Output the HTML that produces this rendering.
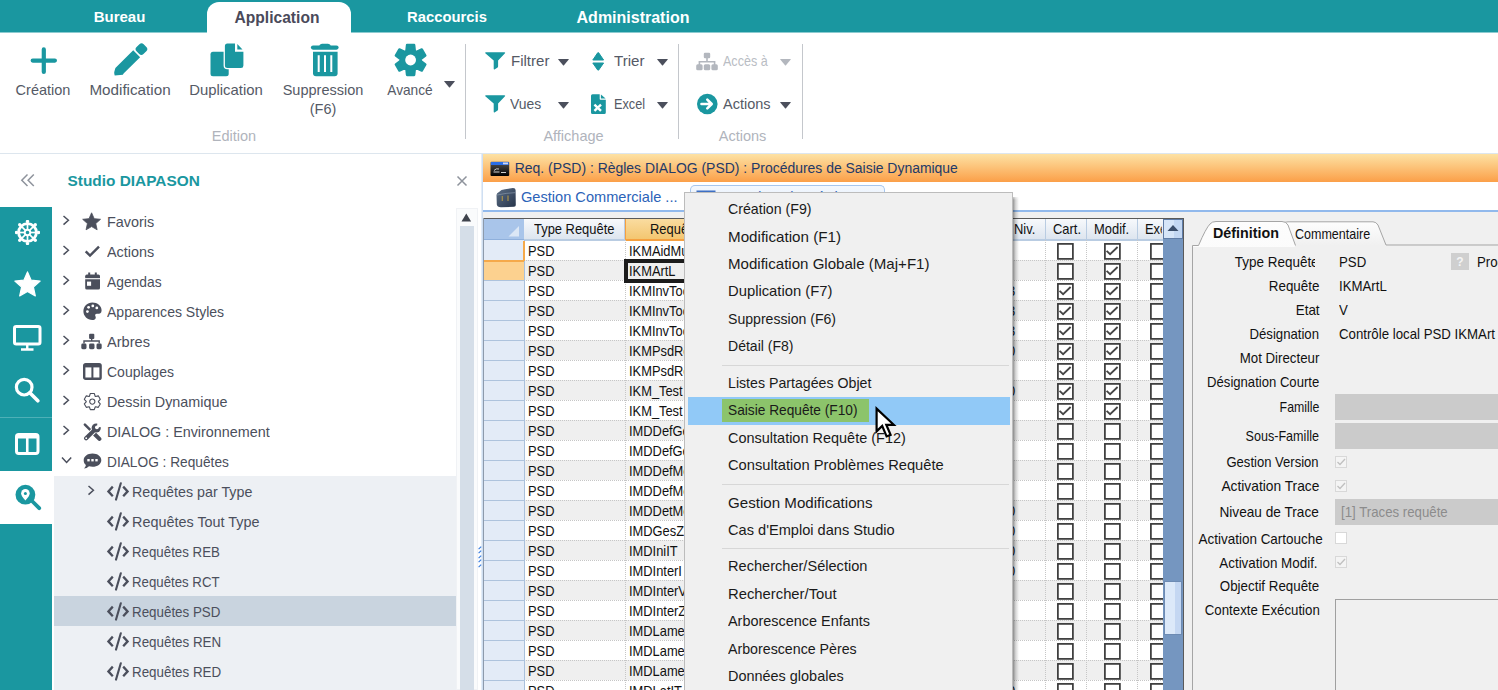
<!DOCTYPE html><html><head><meta charset="utf-8"><style>
html,body{margin:0;padding:0;width:1498px;height:690px;overflow:hidden;background:#fff}
.t{position:absolute;white-space:nowrap;font-family:"Liberation Sans",sans-serif}
.r{position:absolute}
</style></head><body>
<div class="r" style="left:0px;top:0px;width:1498px;height:32px;background:#1a97a0"></div>
<div class="r" style="left:0px;top:32px;width:1498px;height:1px;background:#8ccbd0"></div>
<div class="r" style="left:207px;top:2px;width:144px;height:31px;background:#fff;border-radius:12px 12px 0 0"></div>
<div class="t" style="left:-180.5px;width:600px;text-align:center;top:9.00px;font-size:15px;line-height:15px;color:#fff;font-weight:bold;">Bureau</div>
<div class="t" style="left:-23px;width:600px;text-align:center;top:9.99px;font-size:15.6px;line-height:15.6px;color:#4a4a5a;font-weight:bold;">Application</div>
<div class="t" style="left:147px;width:600px;text-align:center;top:10.27px;font-size:14.8px;line-height:14.8px;color:#fff;font-weight:bold;">Raccourcis</div>
<div class="t" style="left:333px;width:600px;text-align:center;top:9.86px;font-size:16px;line-height:16px;color:#fff;font-weight:bold;">Administration</div>
<div class="r" style="left:0px;top:33px;width:1498px;height:120px;background:#fff"></div>
<div class="r" style="left:0px;top:153px;width:1498px;height:1px;background:#dde6ee"></div>
<div class="t" style="left:-257px;width:600px;text-align:center;top:83.23px;font-size:14.5px;line-height:14.5px;color:#555a66;font-weight:normal;">Création</div>
<div class="t" style="left:-169.8px;width:600px;text-align:center;top:83.23px;font-size:14.5px;line-height:14.5px;color:#555a66;font-weight:normal;transform:scaleX(1.05);transform-origin:center top;">Modification</div>
<div class="t" style="left:-73.80000000000001px;width:600px;text-align:center;top:83.23px;font-size:14.5px;line-height:14.5px;color:#555a66;font-weight:normal;transform:scaleX(1.026);transform-origin:center top;">Duplication</div>
<div class="t" style="left:23px;width:600px;text-align:center;top:83.23px;font-size:14.5px;line-height:14.5px;color:#555a66;font-weight:normal;">Suppression</div>
<div class="t" style="left:23px;width:600px;text-align:center;top:102.23px;font-size:14.5px;line-height:14.5px;color:#555a66;font-weight:normal;">(F6)</div>
<div class="t" style="left:110.30000000000001px;width:600px;text-align:center;top:83.23px;font-size:14.5px;line-height:14.5px;color:#555a66;font-weight:normal;transform:scaleX(0.944);transform-origin:center top;">Avancé</div>
<div class="t" style="left:-66px;width:600px;text-align:center;top:128.73px;font-size:14.5px;line-height:14.5px;color:#b0b4bc;font-weight:normal;">Edition</div>
<div class="t" style="left:273.5px;width:600px;text-align:center;top:128.73px;font-size:14.5px;line-height:14.5px;color:#b0b4bc;font-weight:normal;">Affichage</div>
<div class="t" style="left:442.5px;width:600px;text-align:center;top:128.73px;font-size:14.5px;line-height:14.5px;color:#b0b4bc;font-weight:normal;">Actions</div>
<div class="r" style="left:465px;top:44px;width:1px;height:95px;background:#c4c7cc"></div>
<div class="r" style="left:678px;top:44px;width:1px;height:95px;background:#c4c7cc"></div>
<div class="r" style="left:802px;top:44px;width:1px;height:95px;background:#c4c7cc"></div>
<div class="t" style="left:510.6px;top:54.03px;font-size:14.5px;line-height:14.5px;color:#555a66;font-weight:normal;transform:scaleX(1.037);transform-origin:left top;">Filtrer</div>
<div class="t" style="left:614px;top:54.03px;font-size:14.5px;line-height:14.5px;color:#555a66;font-weight:normal;transform:scaleX(1.042);transform-origin:left top;">Trier</div>
<div class="t" style="left:509.8px;top:97.03px;font-size:14.5px;line-height:14.5px;color:#555a66;font-weight:normal;transform:scaleX(0.96);transform-origin:left top;">Vues</div>
<div class="t" style="left:614.2px;top:97.03px;font-size:14.5px;line-height:14.5px;color:#555a66;font-weight:normal;transform:scaleX(0.877);transform-origin:left top;">Excel</div>
<div class="t" style="left:723.4px;top:54.03px;font-size:14.5px;line-height:14.5px;color:#b9bdc4;font-weight:normal;transform:scaleX(0.865);transform-origin:left top;">Accès à</div>
<div class="t" style="left:723px;top:97.03px;font-size:14.5px;line-height:14.5px;color:#555a66;font-weight:normal;">Actions</div>
<svg class="r" style="left:30px;top:47px" width="28" height="28" viewBox="0 0 28 28"><path d="M13.8 2.4 V24.9 M2.7 13.6 H24.9" stroke="#1a97a0" stroke-width="4.2" stroke-linecap="round"/></svg>
<svg class="r" style="left:110px;top:38px" width="42" height="42" viewBox="0 0 42 42"><g transform="translate(4.6,37.6) rotate(-44.6)"><path d="M0.2 0 Q0.6 -1.2 2 -2.6 L5 -4.4 Q5.8 -4.9 7 -4.9 L31 -4.9 L31 4.9 L8.5 4.9 Q7.5 4.9 6.5 5.2 Z" fill="#1a97a0"/><rect x="32.7" y="-4.9" width="10" height="9.8" rx="3" fill="#1a97a0"/></g></svg>
<svg class="r" style="left:210px;top:43px" width="34" height="34" viewBox="0 0 34 34"><rect x="0.5" y="8.7" width="18.2" height="24.6" rx="2.5" fill="#1a97a0"/><path d="M17.4 0.4 H25 V8.7 H33.4 V22.5 Q33.4 25 31 25 H17.4 Q14.9 25 14.9 22.5 V2.9 Q14.9 0.4 17.4 0.4 Z" fill="#1a97a0" stroke="#fff" stroke-width="2.6"/><path d="M17.4 0.4 H25 V8.7 H33.4 V22.5 Q33.4 25 31 25 H17.4 Q14.9 25 14.9 22.5 V2.9 Q14.9 0.4 17.4 0.4 Z" fill="#1a97a0"/><path d="M27.3 1 L32.5 6.5 L27.3 6.5 Z" fill="#1a97a0"/></svg>
<svg class="r" style="left:310px;top:43px" width="31" height="34" viewBox="0 0 31 34"><path d="M3 4.6 H26.5" stroke="#1a97a0" stroke-width="4.2" stroke-linecap="round"/><path d="M9 3.5 Q9.5 0.8 12 0.8 H18 Q20.5 0.8 21 3.5 Z" fill="#1a97a0"/><path d="M3 8.8 H27.6 V30.3 Q27.6 33.3 24.6 33.3 H6 Q3 33.3 3 30.3 Z" fill="#1a97a0"/><path d="M8.7 12.3 V29.1 M15 12.3 V29.1 M21.3 12.3 V29.1" stroke="#fff" stroke-width="2"/></svg>
<svg class="r" style="left:394px;top:43px" width="34" height="34" viewBox="0 0 34 34"><path d="M12.43 7.69 L13.03 2.02 L20.17 2.02 L20.77 7.69 L22.57 8.73 L27.79 6.42 L31.36 12.60 L26.75 15.96 L26.75 18.04 L31.36 21.40 L27.79 27.58 L22.57 25.27 L20.77 26.31 L20.17 31.98 L13.03 31.98 L12.43 26.31 L10.63 25.27 L5.41 27.58 L1.84 21.40 L6.45 18.04 L6.45 15.96 L1.84 12.60 L5.41 6.42 L10.63 8.73 Z M16.61 17.00 A0.01 0.01 0 1 0 16.59 17.00 A0.01 0.01 0 1 0 16.61 17.00 Z" fill="#1a97a0" stroke="#1a97a0" stroke-width="2.4" stroke-linejoin="round"/><circle cx="16.6" cy="17" r="10.6" fill="#1a97a0"/><circle cx="16.6" cy="17" r="5.4" fill="#fff"/></svg>
<svg class="r" style="left:444px;top:81px" width="11" height="7" viewBox="0 0 11 7"><path d="M0.3 0.6 Q0 0 0.8 0 L10.2 0 Q11 0 10.7 0.6 L6 6.3 Q5.5 6.8 5 6.3 Z" fill="#4b4f5c"/></svg>
<svg class="r" style="left:484.6px;top:52.4px" width="22" height="19" viewBox="0 0 22 19"><path d="M0.8 0.3 H19.5 Q20.6 0.3 20 1.2 L13.1 8.4 V14.3 Q13.1 15 12.6 15.4 L9.9 17.3 Q8.7 17.9 8.7 16.7 V8.4 L0.3 1.2 Q-0.2 0.3 0.8 0.3 Z" fill="#1a97a0"/></svg>
<svg class="r" style="left:484.6px;top:95px" width="22" height="19" viewBox="0 0 22 19"><path d="M0.8 0.3 H19.5 Q20.6 0.3 20 1.2 L13.1 8.4 V14.3 Q13.1 15 12.6 15.4 L9.9 17.3 Q8.7 17.9 8.7 16.7 V8.4 L0.3 1.2 Q-0.2 0.3 0.8 0.3 Z" fill="#1a97a0"/></svg>
<svg class="r" style="left:558px;top:59px" width="11" height="7" viewBox="0 0 11 7"><path d="M0.3 0.6 Q0 0 0.8 0 L10.2 0 Q11 0 10.7 0.6 L6 6.3 Q5.5 6.8 5 6.3 Z" fill="#4b4f5c"/></svg>
<svg class="r" style="left:558px;top:102px" width="11" height="7" viewBox="0 0 11 7"><path d="M0.3 0.6 Q0 0 0.8 0 L10.2 0 Q11 0 10.7 0.6 L6 6.3 Q5.5 6.8 5 6.3 Z" fill="#4b4f5c"/></svg>
<svg class="r" style="left:656.5px;top:59px" width="11" height="7" viewBox="0 0 11 7"><path d="M0.3 0.6 Q0 0 0.8 0 L10.2 0 Q11 0 10.7 0.6 L6 6.3 Q5.5 6.8 5 6.3 Z" fill="#4b4f5c"/></svg>
<svg class="r" style="left:656.5px;top:102px" width="11" height="7" viewBox="0 0 11 7"><path d="M0.3 0.6 Q0 0 0.8 0 L10.2 0 Q11 0 10.7 0.6 L6 6.3 Q5.5 6.8 5 6.3 Z" fill="#4b4f5c"/></svg>
<svg class="r" style="left:591px;top:52px" width="15" height="19" viewBox="0 0 15 19"><path d="M1.8 8 L6.7 0.8 Q7.2 0.3 7.7 0.8 L12.6 8 Z M1.8 11 L12.6 11 L7.7 18 Q7.2 18.5 6.7 18 Z" fill="#1a97a0" stroke="#1a97a0" stroke-width="1" stroke-linejoin="round"/></svg>
<svg class="r" style="left:590px;top:93px" width="17" height="22" viewBox="0 0 17 22"><path d="M2.5 1.2 H9.7 V6 Q9.7 6.7 10.4 6.7 H15.8 V19.5 Q15.8 21 14.3 21 H2.5 Q1 21 1 19.5 V2.7 Q1 1.2 2.5 1.2 Z" fill="#1a97a0"/><path d="M10.9 1.4 L15.6 5.6 H10.9 Z" fill="#1a97a0"/><path d="M4.4 11.6 L11 17.8 M11 11.6 L4.4 17.8" stroke="#fff" stroke-width="2.4"/></svg>
<svg class="r" style="left:695px;top:52px" width="25" height="20" viewBox="0 0 25 20"><rect x="8.8" y="0.8" width="6.4" height="5.4" rx="1.2" fill="#b3b7be"/><path d="M12 6 V9.8 M4.4 13 V9.8 H19.6 V13" fill="none" stroke="#b3b7be" stroke-width="1.6"/><rect x="1.2" y="12.2" width="6.4" height="6" rx="1.5" fill="#b3b7be"/><rect x="8.8" y="12.2" width="6.4" height="6" rx="1.5" fill="#b3b7be"/><rect x="16.4" y="12.2" width="6.4" height="6" rx="1.5" fill="#b3b7be"/></svg>
<svg class="r" style="left:780px;top:59px" width="11" height="7" viewBox="0 0 11 7"><path d="M0.3 0.6 Q0 0 0.8 0 L10.2 0 Q11 0 10.7 0.6 L6 6.3 Q5.5 6.8 5 6.3 Z" fill="#b3b7be"/></svg>
<svg class="r" style="left:696px;top:93px" width="23" height="23" viewBox="0 0 23 23"><circle cx="11.3" cy="11" r="10.3" fill="#1a97a0"/><path d="M5.5 11 H15.5 M11.3 6.6 L15.7 11 L11.3 15.4" fill="none" stroke="#fff" stroke-width="2.6" stroke-linecap="round" stroke-linejoin="round"/></svg>
<svg class="r" style="left:780px;top:102px" width="11" height="7" viewBox="0 0 11 7"><path d="M0.3 0.6 Q0 0 0.8 0 L10.2 0 Q11 0 10.7 0.6 L6 6.3 Q5.5 6.8 5 6.3 Z" fill="#4b4f5c"/></svg>
<div class="r" style="left:0px;top:154px;width:481px;height:536px;background:#fff"></div>
<div class="t" style="left:67.5px;top:172.56px;font-size:15.4px;line-height:15.4px;color:#1a97a0;font-weight:bold;">Studio DIAPASON</div>
<div class="r" style="left:0px;top:206.5px;width:52.4px;height:483.5px;background:#1a97a0"></div>
<div class="r" style="left:0px;top:471px;width:52.4px;height:52.5px;background:#fff"></div>
<div class="r" style="left:0px;top:416.5px;width:52.4px;height:1.5px;background:#4eb0b7"></div>
<div class="r" style="left:54px;top:476px;width:402px;height:214px;background:#edf0f4"></div>
<div class="r" style="left:54px;top:596px;width:402px;height:30px;background:#c9d4df"></div>
<div class="t" style="left:106.5px;top:214.68px;font-size:14.2px;line-height:14.2px;color:#4b4f5c;font-weight:normal;transform:scaleX(1.016);transform-origin:left top;">Favoris</div>
<div class="t" style="left:106.5px;top:244.68px;font-size:14.2px;line-height:14.2px;color:#4b4f5c;font-weight:normal;transform:scaleX(1.016);transform-origin:left top;">Actions</div>
<div class="t" style="left:106.5px;top:274.68px;font-size:14.2px;line-height:14.2px;color:#4b4f5c;font-weight:normal;transform:scaleX(0.974);transform-origin:left top;">Agendas</div>
<div class="t" style="left:106.5px;top:304.68px;font-size:14.2px;line-height:14.2px;color:#4b4f5c;font-weight:normal;transform:scaleX(0.99);transform-origin:left top;">Apparences Styles</div>
<div class="t" style="left:106.5px;top:334.68px;font-size:14.2px;line-height:14.2px;color:#4b4f5c;font-weight:normal;transform:scaleX(1.028);transform-origin:left top;">Arbres</div>
<div class="t" style="left:106.5px;top:364.68px;font-size:14.2px;line-height:14.2px;color:#4b4f5c;font-weight:normal;transform:scaleX(0.987);transform-origin:left top;">Couplages</div>
<div class="t" style="left:106.5px;top:394.68px;font-size:14.2px;line-height:14.2px;color:#4b4f5c;font-weight:normal;transform:scaleX(1.011);transform-origin:left top;">Dessin Dynamique</div>
<div class="t" style="left:106.5px;top:424.68px;font-size:14.2px;line-height:14.2px;color:#4b4f5c;font-weight:normal;transform:scaleX(1.011);transform-origin:left top;">DIALOG : Environnement</div>
<div class="t" style="left:106.5px;top:454.68px;font-size:14.2px;line-height:14.2px;color:#4b4f5c;font-weight:normal;transform:scaleX(0.966);transform-origin:left top;">DIALOG : Requêtes</div>
<div class="t" style="left:132px;top:484.68px;font-size:14.2px;line-height:14.2px;color:#4b4f5c;font-weight:normal;transform:scaleX(1.006);transform-origin:left top;">Requêtes par Type</div>
<div class="t" style="left:132px;top:514.68px;font-size:14.2px;line-height:14.2px;color:#4b4f5c;font-weight:normal;transform:scaleX(1.015);transform-origin:left top;">Requêtes Tout Type</div>
<div class="t" style="left:132px;top:544.68px;font-size:14.2px;line-height:14.2px;color:#4b4f5c;font-weight:normal;transform:scaleX(0.936);transform-origin:left top;">Requêtes REB</div>
<div class="t" style="left:132px;top:574.68px;font-size:14.2px;line-height:14.2px;color:#4b4f5c;font-weight:normal;transform:scaleX(0.933);transform-origin:left top;">Requêtes RCT</div>
<div class="t" style="left:132px;top:604.68px;font-size:14.2px;line-height:14.2px;color:#4b4f5c;font-weight:normal;transform:scaleX(0.942);transform-origin:left top;">Requêtes PSD</div>
<div class="t" style="left:132px;top:634.68px;font-size:14.2px;line-height:14.2px;color:#4b4f5c;font-weight:normal;transform:scaleX(0.942);transform-origin:left top;">Requêtes REN</div>
<div class="t" style="left:132px;top:664.68px;font-size:14.2px;line-height:14.2px;color:#4b4f5c;font-weight:normal;transform:scaleX(0.942);transform-origin:left top;">Requêtes RED</div>
<div class="r" style="left:456px;top:208px;width:22px;height:482px;background:#fafbfc;border:1px solid #f0f2f5;box-sizing:border-box"></div>
<div class="r" style="left:460px;top:226px;width:14px;height:464px;background:#d5dee8"></div>
<svg class="r" style="left:20px;top:173px" width="16" height="15" viewBox="0 0 16 15"><path d="M7.5 1.5 L1.8 7.2 L7.5 13 M13.8 1.5 L8.1 7.2 L13.8 13" fill="none" stroke="#8e939c" stroke-width="1.5"/></svg>
<svg class="r" style="left:456px;top:175px" width="12" height="12" viewBox="0 0 12 12"><path d="M1.5 1.5 L10.5 10.5 M10.5 1.5 L1.5 10.5" stroke="#8e939c" stroke-width="1.5"/></svg>
<svg class="r" style="left:14.6px;top:219.8px" width="25" height="25" viewBox="0 0 25 25"><line x1="12.50" y1="9.20" x2="12.50" y2="3.50" stroke="#fff" stroke-width="1.7"/><circle cx="12.50" cy="1.50" r="1.7" fill="#fff"/><line x1="14.83" y1="10.17" x2="18.86" y2="6.14" stroke="#fff" stroke-width="1.7"/><circle cx="20.28" cy="4.72" r="1.7" fill="#fff"/><line x1="15.80" y1="12.50" x2="21.50" y2="12.50" stroke="#fff" stroke-width="1.7"/><circle cx="23.50" cy="12.50" r="1.7" fill="#fff"/><line x1="14.83" y1="14.83" x2="18.86" y2="18.86" stroke="#fff" stroke-width="1.7"/><circle cx="20.28" cy="20.28" r="1.7" fill="#fff"/><line x1="12.50" y1="15.80" x2="12.50" y2="21.50" stroke="#fff" stroke-width="1.7"/><circle cx="12.50" cy="23.50" r="1.7" fill="#fff"/><line x1="10.17" y1="14.83" x2="6.14" y2="18.86" stroke="#fff" stroke-width="1.7"/><circle cx="4.72" cy="20.28" r="1.7" fill="#fff"/><line x1="9.20" y1="12.50" x2="3.50" y2="12.50" stroke="#fff" stroke-width="1.7"/><circle cx="1.50" cy="12.50" r="1.7" fill="#fff"/><line x1="10.17" y1="10.17" x2="6.14" y2="6.14" stroke="#fff" stroke-width="1.7"/><circle cx="4.72" cy="4.72" r="1.7" fill="#fff"/><circle cx="12.5" cy="12.5" r="8.9" fill="none" stroke="#fff" stroke-width="2.9"/><circle cx="12.5" cy="12.5" r="2.8" fill="none" stroke="#fff" stroke-width="2"/></svg>
<svg class="r" style="left:14px;top:271px" width="27" height="27" viewBox="0 0 27 27"><path d="M13.50 0.90 L17.14 9.18 L26.15 10.09 L19.40 16.12 L21.32 24.96 L13.50 20.40 L5.68 24.96 L7.60 16.12 L0.85 10.09 L9.86 9.18 Z" fill="#fff" stroke="#fff" stroke-width="1.2" stroke-linejoin="round"/></svg>
<svg class="r" style="left:12.7px;top:324.5px" width="29" height="27" viewBox="0 0 29 27"><rect x="1.5" y="1.5" width="25.5" height="17.5" rx="1.8" fill="none" stroke="#fff" stroke-width="3"/><path d="M14.25 19 V23.5 M8 24.5 H20.5" stroke="#fff" stroke-width="2.4"/></svg>
<svg class="r" style="left:14px;top:377px" width="27" height="26" viewBox="0 0 27 26"><circle cx="10.2" cy="10.2" r="7.8" fill="none" stroke="#fff" stroke-width="3.2"/><path d="M15.8 15.8 L23.8 23.8" stroke="#fff" stroke-width="3.6" stroke-linecap="round"/></svg>
<svg class="r" style="left:15px;top:432.5px" width="25" height="22" viewBox="0 0 25 22"><rect x="1.5" y="1.5" width="21.5" height="19" rx="2.2" fill="none" stroke="#fff" stroke-width="3"/><path d="M12.25 3 V20" stroke="#fff" stroke-width="2.6"/><path d="M1.5 4 H23" stroke="#fff" stroke-width="3"/></svg>
<svg class="r" style="left:14.5px;top:484px" width="27" height="27" viewBox="0 0 27 27"><circle cx="10.4" cy="10.7" r="9.9" fill="#1a97a0"/><path d="M17 17 L24.2 24.2" stroke="#1a97a0" stroke-width="3.8" stroke-linecap="round"/><path d="M10.4 16.6 Q6.1 11.6 6.1 9.4 A4.3 4.3 0 0 1 14.7 9.4 Q14.7 11.6 10.4 16.6 Z" fill="#fff"/><circle cx="10.4" cy="9.4" r="1.5" fill="#1a97a0"/></svg>
<svg class="r" style="left:61.5px;top:214.6px" width="9" height="11" viewBox="0 0 9 11"><path d="M1.5 1 L6.4 5.3 L1.5 9.6" fill="none" stroke="#4b4f5c" stroke-width="1.5"/></svg>
<svg class="r" style="left:61.5px;top:244.6px" width="9" height="11" viewBox="0 0 9 11"><path d="M1.5 1 L6.4 5.3 L1.5 9.6" fill="none" stroke="#4b4f5c" stroke-width="1.5"/></svg>
<svg class="r" style="left:61.5px;top:274.6px" width="9" height="11" viewBox="0 0 9 11"><path d="M1.5 1 L6.4 5.3 L1.5 9.6" fill="none" stroke="#4b4f5c" stroke-width="1.5"/></svg>
<svg class="r" style="left:61.5px;top:304.6px" width="9" height="11" viewBox="0 0 9 11"><path d="M1.5 1 L6.4 5.3 L1.5 9.6" fill="none" stroke="#4b4f5c" stroke-width="1.5"/></svg>
<svg class="r" style="left:61.5px;top:334.6px" width="9" height="11" viewBox="0 0 9 11"><path d="M1.5 1 L6.4 5.3 L1.5 9.6" fill="none" stroke="#4b4f5c" stroke-width="1.5"/></svg>
<svg class="r" style="left:61.5px;top:364.6px" width="9" height="11" viewBox="0 0 9 11"><path d="M1.5 1 L6.4 5.3 L1.5 9.6" fill="none" stroke="#4b4f5c" stroke-width="1.5"/></svg>
<svg class="r" style="left:61.5px;top:394.6px" width="9" height="11" viewBox="0 0 9 11"><path d="M1.5 1 L6.4 5.3 L1.5 9.6" fill="none" stroke="#4b4f5c" stroke-width="1.5"/></svg>
<svg class="r" style="left:61.5px;top:424.6px" width="9" height="11" viewBox="0 0 9 11"><path d="M1.5 1 L6.4 5.3 L1.5 9.6" fill="none" stroke="#4b4f5c" stroke-width="1.5"/></svg>
<svg class="r" style="left:60.5px;top:456px" width="12" height="9" viewBox="0 0 12 9"><path d="M1 1.5 L5.6 6.5 L10.2 1.5" fill="none" stroke="#4b4f5c" stroke-width="1.5"/></svg>
<svg class="r" style="left:86.5px;top:485px" width="9" height="11" viewBox="0 0 9 11"><path d="M1.5 1 L6.4 5.3 L1.5 9.6" fill="none" stroke="#4b4f5c" stroke-width="1.5"/></svg>
<svg class="r" style="left:82px;top:212px" width="20" height="19" viewBox="0 0 20 19"><path d="M9.60 0.80 L12.19 6.64 L18.54 7.30 L13.78 11.56 L15.13 17.80 L9.60 14.60 L4.07 17.80 L5.42 11.56 L0.66 7.30 L7.01 6.64 Z" fill="#4b4f5c" stroke="#4b4f5c" stroke-width="0.8" stroke-linejoin="round"/></svg>
<svg class="r" style="left:84px;top:245px" width="17" height="13" viewBox="0 0 17 13"><path d="M1.7 6.3 L6 10.6 L15 1.6" fill="none" stroke="#4b4f5c" stroke-width="2.4"/></svg>
<svg class="r" style="left:85px;top:272px" width="16" height="18" viewBox="0 0 16 18"><rect x="0.2" y="2.6" width="14.8" height="14.9" rx="1.6" fill="#4b4f5c"/><rect x="3.2" y="0.5" width="2" height="3.5" fill="#4b4f5c"/><rect x="9.8" y="0.5" width="2" height="3.5" fill="#4b4f5c"/><path d="M0 6.7 H15" stroke="#fff" stroke-width="1.1"/><rect x="2" y="9.6" width="4.1" height="4.2" fill="#fff"/></svg>
<svg class="r" style="left:83px;top:302px" width="19" height="19" viewBox="0 0 19 19"><path d="M9.3 0.6 C14.5 0.6 18.6 4 18.6 8.4 C18.6 11.4 16 12 14.3 11.8 C12.4 11.6 11.7 13 12.4 14.2 C13.3 15.8 12.6 18 9.3 18 C4.4 18 0.4 14.1 0.4 9.3 C0.4 4.5 4.4 0.6 9.3 0.6 Z" fill="#4b4f5c"/><circle cx="4.4" cy="9.6" r="1.4" fill="#fff"/><circle cx="5.6" cy="5.3" r="1.4" fill="#fff"/><circle cx="9.8" cy="3.9" r="1.4" fill="#fff"/><circle cx="13.8" cy="5.9" r="1.4" fill="#fff"/></svg>
<svg class="r" style="left:81px;top:333px" width="21" height="17" viewBox="0 0 21 17"><rect x="8.1" y="0.8" width="5.2" height="5.2" rx="1" fill="#4b4f5c"/><path d="M10.7 5.5 V8 M3 10.5 V8 H18.2 V10.5" fill="none" stroke="#4b4f5c" stroke-width="1.4"/><rect x="0.3" y="10.6" width="5.2" height="5.6" rx="1.4" fill="#4b4f5c"/><rect x="8.1" y="10.6" width="5.4" height="5.6" rx="1.4" fill="#4b4f5c"/><rect x="15.5" y="10.6" width="5.2" height="5.6" rx="1.4" fill="#4b4f5c"/></svg>
<svg class="r" style="left:83px;top:363px" width="19" height="17" viewBox="0 0 19 17"><rect x="1.2" y="1.2" width="16.4" height="14.6" rx="1.4" fill="none" stroke="#4b4f5c" stroke-width="2.4"/><path d="M1.2 2.8 H17.6" stroke="#4b4f5c" stroke-width="3.2"/><path d="M9.4 3 V15" stroke="#4b4f5c" stroke-width="2"/></svg>
<svg class="r" style="left:83px;top:392px" width="19" height="19" viewBox="0 0 19 19"><path d="M6.42 4.22 L7.32 1.54 L11.28 1.54 L12.18 4.22 L12.52 4.42 L15.29 3.85 L17.27 7.29 L15.40 9.41 L15.40 9.79 L17.27 11.91 L15.29 15.35 L12.52 14.78 L12.18 14.98 L11.28 17.66 L7.32 17.66 L6.42 14.98 L6.08 14.78 L3.31 15.35 L1.33 11.91 L3.20 9.79 L3.20 9.41 L1.33 7.29 L3.31 3.85 L6.08 4.42 Z M11.90 9.60 A2.6 2.6 0 1 0 6.70 9.60 A2.6 2.6 0 1 0 11.90 9.60 Z" fill="none" stroke="#4b4f5c" stroke-width="1.1" stroke-linejoin="round"/></svg>
<svg class="r" style="left:82.5px;top:422.5px" width="20" height="18" viewBox="0 0 20 18"><path d="M1.9 1.6 L10.2 9.8" stroke="#4b4f5c" stroke-width="2.5" stroke-linecap="round"/><path d="M11.2 10.8 L16.4 15.9" stroke="#4b4f5c" stroke-width="4" stroke-linecap="round"/><path d="M3.1 15.3 L10.6 7.9" stroke="#fff" stroke-width="6" stroke-linecap="round"/><path d="M3.1 15.3 L10.6 7.9" stroke="#4b4f5c" stroke-width="4.1" stroke-linecap="round"/><circle cx="13.2" cy="5" r="4.6" fill="#4b4f5c"/><circle cx="13.9" cy="4.3" r="1.9" fill="#fff"/><path d="M13.9 4.3 L14.6 -1.5 L20.5 4 Z" fill="#fff"/><circle cx="3.2" cy="15.2" r="0.9" fill="#fff"/></svg>
<svg class="r" style="left:83px;top:453px" width="19" height="17" viewBox="0 0 19 17"><path d="M9.5 0.6 C14.6 0.6 18.3 3.5 18.3 7.2 C18.3 10.9 14.6 13.8 9.5 13.8 C8.2 13.8 7.1 13.6 6 13.3 Q3.8 15.4 1 15.6 Q2.8 13.8 2.9 12 C1.4 10.8 0.7 9.1 0.7 7.2 C0.7 3.5 4.4 0.6 9.5 0.6 Z" fill="#4b4f5c"/><rect x="4.3" y="6" width="2.4" height="2.4" fill="#fff"/><rect x="8.3" y="6" width="2.4" height="2.4" fill="#fff"/><rect x="12.3" y="6" width="2.4" height="2.4" fill="#fff"/></svg>
<svg class="r" style="left:105.5px;top:482px" width="25" height="19" viewBox="0 0 25 19"><path d="M6.8 4.6 L2.4 9.4 L6.8 14.2 M17.2 4.6 L21.6 9.4 L17.2 14.2" fill="none" stroke="#4b4f5c" stroke-width="2.3"/><path d="M14.8 1.2 L10 17.6" stroke="#4b4f5c" stroke-width="2.1" stroke-linecap="round"/></svg>
<svg class="r" style="left:105.5px;top:512px" width="25" height="19" viewBox="0 0 25 19"><path d="M6.8 4.6 L2.4 9.4 L6.8 14.2 M17.2 4.6 L21.6 9.4 L17.2 14.2" fill="none" stroke="#4b4f5c" stroke-width="2.3"/><path d="M14.8 1.2 L10 17.6" stroke="#4b4f5c" stroke-width="2.1" stroke-linecap="round"/></svg>
<svg class="r" style="left:105.5px;top:542px" width="25" height="19" viewBox="0 0 25 19"><path d="M6.8 4.6 L2.4 9.4 L6.8 14.2 M17.2 4.6 L21.6 9.4 L17.2 14.2" fill="none" stroke="#4b4f5c" stroke-width="2.3"/><path d="M14.8 1.2 L10 17.6" stroke="#4b4f5c" stroke-width="2.1" stroke-linecap="round"/></svg>
<svg class="r" style="left:105.5px;top:572px" width="25" height="19" viewBox="0 0 25 19"><path d="M6.8 4.6 L2.4 9.4 L6.8 14.2 M17.2 4.6 L21.6 9.4 L17.2 14.2" fill="none" stroke="#4b4f5c" stroke-width="2.3"/><path d="M14.8 1.2 L10 17.6" stroke="#4b4f5c" stroke-width="2.1" stroke-linecap="round"/></svg>
<svg class="r" style="left:105.5px;top:602px" width="25" height="19" viewBox="0 0 25 19"><path d="M6.8 4.6 L2.4 9.4 L6.8 14.2 M17.2 4.6 L21.6 9.4 L17.2 14.2" fill="none" stroke="#4b4f5c" stroke-width="2.3"/><path d="M14.8 1.2 L10 17.6" stroke="#4b4f5c" stroke-width="2.1" stroke-linecap="round"/></svg>
<svg class="r" style="left:105.5px;top:632px" width="25" height="19" viewBox="0 0 25 19"><path d="M6.8 4.6 L2.4 9.4 L6.8 14.2 M17.2 4.6 L21.6 9.4 L17.2 14.2" fill="none" stroke="#4b4f5c" stroke-width="2.3"/><path d="M14.8 1.2 L10 17.6" stroke="#4b4f5c" stroke-width="2.1" stroke-linecap="round"/></svg>
<svg class="r" style="left:105.5px;top:662px" width="25" height="19" viewBox="0 0 25 19"><path d="M6.8 4.6 L2.4 9.4 L6.8 14.2 M17.2 4.6 L21.6 9.4 L17.2 14.2" fill="none" stroke="#4b4f5c" stroke-width="2.3"/><path d="M14.8 1.2 L10 17.6" stroke="#4b4f5c" stroke-width="2.1" stroke-linecap="round"/></svg>
<div class="r" style="left:481px;top:154px;width:1017px;height:536px;background:#f0f0f0"></div>
<div class="r" style="left:481px;top:154px;width:1px;height:536px;background:#e4edf8"></div>
<div class="r" style="left:482px;top:154px;width:1px;height:536px;background:#cfdff2"></div>
<div class="r" style="left:483px;top:154px;width:1015px;height:28.5px;background:linear-gradient(#fde2a4,#fb9d45)"></div>
<div class="t" style="left:514.8px;top:161.79px;font-size:13.95px;line-height:13.95px;color:#233a68;font-weight:normal;">Req. (PSD) : Règles DIALOG (PSD) : Procédures de Saisie Dynamique</div>
<div class="r" style="left:483px;top:182px;width:1015px;height:28px;background:#fff"></div>
<div class="r" style="left:483px;top:210px;width:1015px;height:2px;background:#91b9ec"></div>
<div class="t" style="left:521px;top:190.14px;font-size:14.6px;line-height:14.6px;color:#2b63b8;font-weight:normal;">Gestion Commerciale ...</div>
<svg class="r" style="left:490px;top:161px" width="20" height="16" viewBox="0 0 20 16"><defs><linearGradient id="cg" x1="0" y1="0" x2="0" y2="1"><stop offset="0" stop-color="#555"/><stop offset="1" stop-color="#000"/></linearGradient></defs><rect x="0.5" y="0.7" width="18.7" height="14.3" rx="1" fill="url(#cg)"/><rect x="1" y="1" width="17.7" height="3" fill="#2a6ee8"/><rect x="13" y="1.5" width="5" height="1.8" fill="#cfd8f0"/><path d="M4 9.5 Q6 7 9 8 M3.5 11 H9.5 M11 11.5 H16" stroke="#cfcfcf" stroke-width="1" fill="none"/></svg>
<svg class="r" style="left:496px;top:187px" width="21" height="21" viewBox="0 0 21 21"><defs><linearGradient id="bg1" x1="0" y1="0" x2="1" y2="1"><stop offset="0" stop-color="#5d6f86"/><stop offset="1" stop-color="#26344a"/></linearGradient></defs><path d="M3 5 Q5 2.5 9 2.2 L17 1 Q19.5 1 19.6 3 L19.8 18 Q19.8 19.6 18 19.8 L5 20.3 Q1 20 0.8 17.5 L0.5 8 Q0.6 6 3 5 Z" fill="url(#bg1)"/><path d="M6.3 9 V14 M12 8.6 V14" stroke="#a9924a" stroke-width="1.2"/><path d="M1 8 Q10 6 19.5 5.6" stroke="#8595a8" stroke-width="0.7" fill="none"/></svg>
<svg class="r" style="left:478px;top:546.0px" width="4" height="4" viewBox="0 0 4 4"><path d="M0.6 3.2 L3.2 0.6" stroke="#3b7fe0" stroke-width="1.2"/></svg>
<svg class="r" style="left:478px;top:550.4px" width="4" height="4" viewBox="0 0 4 4"><path d="M0.6 3.2 L3.2 0.6" stroke="#3b7fe0" stroke-width="1.2"/></svg>
<svg class="r" style="left:478px;top:554.8px" width="4" height="4" viewBox="0 0 4 4"><path d="M0.6 3.2 L3.2 0.6" stroke="#3b7fe0" stroke-width="1.2"/></svg>
<svg class="r" style="left:478px;top:559.2px" width="4" height="4" viewBox="0 0 4 4"><path d="M0.6 3.2 L3.2 0.6" stroke="#3b7fe0" stroke-width="1.2"/></svg>
<svg class="r" style="left:478px;top:563.6px" width="4" height="4" viewBox="0 0 4 4"><path d="M0.6 3.2 L3.2 0.6" stroke="#3b7fe0" stroke-width="1.2"/></svg>
<svg class="r" style="left:461px;top:213px" width="11" height="9" viewBox="0 0 11 9"><path d="M0.5 8.5 L5.3 0.5 L10.1 8.5 Z" fill="#3f434c"/></svg>
<div class="r" style="left:483px;top:218px;width:701px;height:472px;background:#fff;border:1px solid #555;box-sizing:border-box"></div>
<div class="r" style="left:483px;top:212px;width:1015px;height:6px;background:#f0f0f0"></div>
<div class="r" style="left:483px;top:218px;width:701px;height:472px;background:#fff"></div>
<div class="r" style="left:483px;top:218px;width:701px;height:1px;background:#5a5a5a"></div>
<div class="r" style="left:483px;top:218px;width:1px;height:472px;background:#8d9aab"></div>
<div class="r" style="left:1183px;top:218px;width:1px;height:472px;background:#5a5a5a"></div>
<div class="r" style="left:484px;top:219px;width:40px;height:21px;background:#a9c5ea;border-bottom:1px solid #8fb0dc;box-sizing:border-box"></div>
<svg class="r" style="left:508px;top:226px" width="12" height="11" viewBox="0 0 12 11"><path d="M11 0 L11 10.5 L0.5 10.5 Z" fill="#dbe7f6"/></svg>
<div class="r" style="left:524px;top:219px;width:101px;height:21px;background:linear-gradient(#f7f9fc,#dde5ef);border-bottom:1px solid #b3c7de;border-right:1px solid #b9cce2;box-sizing:border-box"></div>
<div class="r" style="left:625px;top:219px;width:400px;height:21px;background:linear-gradient(#fadca0,#f3c56e)"></div>
<div class="r" style="left:985px;top:219px;width:61px;height:21px;background:linear-gradient(#f7f9fc,#dde5ef);border-bottom:1px solid #b3c7de;border-right:1px solid #b9cce2;box-sizing:border-box"></div>
<div class="r" style="left:1046px;top:219px;width:41px;height:21px;background:linear-gradient(#f7f9fc,#dde5ef);border-bottom:1px solid #b3c7de;border-right:1px solid #b9cce2;box-sizing:border-box"></div>
<div class="r" style="left:1087px;top:219px;width:51px;height:21px;background:linear-gradient(#f7f9fc,#dde5ef);border-bottom:1px solid #b3c7de;border-right:1px solid #b9cce2;box-sizing:border-box"></div>
<div class="r" style="left:1138px;top:219px;width:25px;height:21px;background:linear-gradient(#f7f9fc,#dde5ef);border-bottom:1px solid #b3c7de;box-sizing:border-box"></div>
<div class="t" style="left:534.2px;top:222.93px;font-size:13.9px;line-height:13.9px;color:#111;font-weight:normal;transform:scaleX(0.93);transform-origin:left top;">Type Requête</div>
<div class="t" style="left:650px;top:222.93px;font-size:13.9px;line-height:13.9px;color:#111;font-weight:normal;transform:scaleX(0.93);transform-origin:left top;">Requête</div>
<div class="t" style="left:1013.8px;top:222.93px;font-size:13.9px;line-height:13.9px;color:#111;font-weight:normal;transform:scaleX(0.93);transform-origin:left top;">Niv.</div>
<div class="t" style="left:1052.8px;top:222.93px;font-size:13.9px;line-height:13.9px;color:#111;font-weight:normal;transform:scaleX(0.93);transform-origin:left top;">Cart.</div>
<div class="t" style="left:1094px;top:222.93px;font-size:13.9px;line-height:13.9px;color:#111;font-weight:normal;transform:scaleX(0.93);transform-origin:left top;">Modif.</div>
<div class="t" style="left:1145px;top:222.93px;font-size:13.9px;line-height:13.9px;color:#111;font-weight:normal;transform:scaleX(0.93);transform-origin:left top;width:18px;overflow:hidden;">Exécution</div>
<div class="r" style="left:524px;top:240px;width:639px;height:20px;background:#ffffff"></div>
<div class="r" style="left:484px;top:240px;width:40px;height:20px;background:#e3ebf7"></div>
<div class="r" style="left:524px;top:260px;width:639px;height:20px;background:#efefef"></div>
<div class="r" style="left:484px;top:260px;width:40px;height:20px;background:#e3ebf7"></div>
<div class="r" style="left:524px;top:280px;width:639px;height:20px;background:#ffffff"></div>
<div class="r" style="left:484px;top:280px;width:40px;height:20px;background:#e3ebf7"></div>
<div class="r" style="left:524px;top:300px;width:639px;height:20px;background:#efefef"></div>
<div class="r" style="left:484px;top:300px;width:40px;height:20px;background:#e3ebf7"></div>
<div class="r" style="left:524px;top:320px;width:639px;height:20px;background:#ffffff"></div>
<div class="r" style="left:484px;top:320px;width:40px;height:20px;background:#e3ebf7"></div>
<div class="r" style="left:524px;top:340px;width:639px;height:20px;background:#efefef"></div>
<div class="r" style="left:484px;top:340px;width:40px;height:20px;background:#e3ebf7"></div>
<div class="r" style="left:524px;top:360px;width:639px;height:20px;background:#ffffff"></div>
<div class="r" style="left:484px;top:360px;width:40px;height:20px;background:#e3ebf7"></div>
<div class="r" style="left:524px;top:380px;width:639px;height:20px;background:#efefef"></div>
<div class="r" style="left:484px;top:380px;width:40px;height:20px;background:#e3ebf7"></div>
<div class="r" style="left:524px;top:400px;width:639px;height:20px;background:#ffffff"></div>
<div class="r" style="left:484px;top:400px;width:40px;height:20px;background:#e3ebf7"></div>
<div class="r" style="left:524px;top:420px;width:639px;height:20px;background:#efefef"></div>
<div class="r" style="left:484px;top:420px;width:40px;height:20px;background:#e3ebf7"></div>
<div class="r" style="left:524px;top:440px;width:639px;height:20px;background:#ffffff"></div>
<div class="r" style="left:484px;top:440px;width:40px;height:20px;background:#e3ebf7"></div>
<div class="r" style="left:524px;top:460px;width:639px;height:20px;background:#efefef"></div>
<div class="r" style="left:484px;top:460px;width:40px;height:20px;background:#e3ebf7"></div>
<div class="r" style="left:524px;top:480px;width:639px;height:20px;background:#ffffff"></div>
<div class="r" style="left:484px;top:480px;width:40px;height:20px;background:#e3ebf7"></div>
<div class="r" style="left:524px;top:500px;width:639px;height:20px;background:#efefef"></div>
<div class="r" style="left:484px;top:500px;width:40px;height:20px;background:#e3ebf7"></div>
<div class="r" style="left:524px;top:520px;width:639px;height:20px;background:#ffffff"></div>
<div class="r" style="left:484px;top:520px;width:40px;height:20px;background:#e3ebf7"></div>
<div class="r" style="left:524px;top:540px;width:639px;height:20px;background:#efefef"></div>
<div class="r" style="left:484px;top:540px;width:40px;height:20px;background:#e3ebf7"></div>
<div class="r" style="left:524px;top:560px;width:639px;height:20px;background:#ffffff"></div>
<div class="r" style="left:484px;top:560px;width:40px;height:20px;background:#e3ebf7"></div>
<div class="r" style="left:524px;top:580px;width:639px;height:20px;background:#efefef"></div>
<div class="r" style="left:484px;top:580px;width:40px;height:20px;background:#e3ebf7"></div>
<div class="r" style="left:524px;top:600px;width:639px;height:20px;background:#ffffff"></div>
<div class="r" style="left:484px;top:600px;width:40px;height:20px;background:#e3ebf7"></div>
<div class="r" style="left:524px;top:620px;width:639px;height:20px;background:#efefef"></div>
<div class="r" style="left:484px;top:620px;width:40px;height:20px;background:#e3ebf7"></div>
<div class="r" style="left:524px;top:640px;width:639px;height:20px;background:#ffffff"></div>
<div class="r" style="left:484px;top:640px;width:40px;height:20px;background:#e3ebf7"></div>
<div class="r" style="left:524px;top:660px;width:639px;height:20px;background:#efefef"></div>
<div class="r" style="left:484px;top:660px;width:40px;height:20px;background:#e3ebf7"></div>
<div class="r" style="left:524px;top:680px;width:639px;height:20px;background:#ffffff"></div>
<div class="r" style="left:484px;top:680px;width:40px;height:20px;background:#e3ebf7"></div>
<div class="r" style="left:524px;top:239px;width:101px;height:2px;background:#b9cce2"></div>
<div class="r" style="left:985px;top:239px;width:178px;height:2px;background:#b9cce2"></div>
<div class="r" style="left:625px;top:239px;width:360px;height:2px;background:#f5a040"></div>
<div class="r" style="left:625px;top:219px;width:1px;height:22px;background:#f5a040"></div>
<div class="r" style="left:484px;top:260px;width:40px;height:1px;background:#aec3dd"></div>
<div class="r" style="left:524px;top:260px;width:639px;height:1px;background-image:repeating-linear-gradient(90deg,#c6c6c6 0 1px,transparent 1px 2px)"></div>
<div class="r" style="left:484px;top:280px;width:40px;height:1px;background:#aec3dd"></div>
<div class="r" style="left:524px;top:280px;width:639px;height:1px;background-image:repeating-linear-gradient(90deg,#c6c6c6 0 1px,transparent 1px 2px)"></div>
<div class="r" style="left:484px;top:300px;width:40px;height:1px;background:#aec3dd"></div>
<div class="r" style="left:524px;top:300px;width:639px;height:1px;background-image:repeating-linear-gradient(90deg,#c6c6c6 0 1px,transparent 1px 2px)"></div>
<div class="r" style="left:484px;top:320px;width:40px;height:1px;background:#aec3dd"></div>
<div class="r" style="left:524px;top:320px;width:639px;height:1px;background-image:repeating-linear-gradient(90deg,#c6c6c6 0 1px,transparent 1px 2px)"></div>
<div class="r" style="left:484px;top:340px;width:40px;height:1px;background:#aec3dd"></div>
<div class="r" style="left:524px;top:340px;width:639px;height:1px;background-image:repeating-linear-gradient(90deg,#c6c6c6 0 1px,transparent 1px 2px)"></div>
<div class="r" style="left:484px;top:360px;width:40px;height:1px;background:#aec3dd"></div>
<div class="r" style="left:524px;top:360px;width:639px;height:1px;background-image:repeating-linear-gradient(90deg,#c6c6c6 0 1px,transparent 1px 2px)"></div>
<div class="r" style="left:484px;top:380px;width:40px;height:1px;background:#aec3dd"></div>
<div class="r" style="left:524px;top:380px;width:639px;height:1px;background-image:repeating-linear-gradient(90deg,#c6c6c6 0 1px,transparent 1px 2px)"></div>
<div class="r" style="left:484px;top:400px;width:40px;height:1px;background:#aec3dd"></div>
<div class="r" style="left:524px;top:400px;width:639px;height:1px;background-image:repeating-linear-gradient(90deg,#c6c6c6 0 1px,transparent 1px 2px)"></div>
<div class="r" style="left:484px;top:420px;width:40px;height:1px;background:#aec3dd"></div>
<div class="r" style="left:524px;top:420px;width:639px;height:1px;background-image:repeating-linear-gradient(90deg,#c6c6c6 0 1px,transparent 1px 2px)"></div>
<div class="r" style="left:484px;top:440px;width:40px;height:1px;background:#aec3dd"></div>
<div class="r" style="left:524px;top:440px;width:639px;height:1px;background-image:repeating-linear-gradient(90deg,#c6c6c6 0 1px,transparent 1px 2px)"></div>
<div class="r" style="left:484px;top:460px;width:40px;height:1px;background:#aec3dd"></div>
<div class="r" style="left:524px;top:460px;width:639px;height:1px;background-image:repeating-linear-gradient(90deg,#c6c6c6 0 1px,transparent 1px 2px)"></div>
<div class="r" style="left:484px;top:480px;width:40px;height:1px;background:#aec3dd"></div>
<div class="r" style="left:524px;top:480px;width:639px;height:1px;background-image:repeating-linear-gradient(90deg,#c6c6c6 0 1px,transparent 1px 2px)"></div>
<div class="r" style="left:484px;top:500px;width:40px;height:1px;background:#aec3dd"></div>
<div class="r" style="left:524px;top:500px;width:639px;height:1px;background-image:repeating-linear-gradient(90deg,#c6c6c6 0 1px,transparent 1px 2px)"></div>
<div class="r" style="left:484px;top:520px;width:40px;height:1px;background:#aec3dd"></div>
<div class="r" style="left:524px;top:520px;width:639px;height:1px;background-image:repeating-linear-gradient(90deg,#c6c6c6 0 1px,transparent 1px 2px)"></div>
<div class="r" style="left:484px;top:540px;width:40px;height:1px;background:#aec3dd"></div>
<div class="r" style="left:524px;top:540px;width:639px;height:1px;background-image:repeating-linear-gradient(90deg,#c6c6c6 0 1px,transparent 1px 2px)"></div>
<div class="r" style="left:484px;top:560px;width:40px;height:1px;background:#aec3dd"></div>
<div class="r" style="left:524px;top:560px;width:639px;height:1px;background-image:repeating-linear-gradient(90deg,#c6c6c6 0 1px,transparent 1px 2px)"></div>
<div class="r" style="left:484px;top:580px;width:40px;height:1px;background:#aec3dd"></div>
<div class="r" style="left:524px;top:580px;width:639px;height:1px;background-image:repeating-linear-gradient(90deg,#c6c6c6 0 1px,transparent 1px 2px)"></div>
<div class="r" style="left:484px;top:600px;width:40px;height:1px;background:#aec3dd"></div>
<div class="r" style="left:524px;top:600px;width:639px;height:1px;background-image:repeating-linear-gradient(90deg,#c6c6c6 0 1px,transparent 1px 2px)"></div>
<div class="r" style="left:484px;top:620px;width:40px;height:1px;background:#aec3dd"></div>
<div class="r" style="left:524px;top:620px;width:639px;height:1px;background-image:repeating-linear-gradient(90deg,#c6c6c6 0 1px,transparent 1px 2px)"></div>
<div class="r" style="left:484px;top:640px;width:40px;height:1px;background:#aec3dd"></div>
<div class="r" style="left:524px;top:640px;width:639px;height:1px;background-image:repeating-linear-gradient(90deg,#c6c6c6 0 1px,transparent 1px 2px)"></div>
<div class="r" style="left:484px;top:660px;width:40px;height:1px;background:#aec3dd"></div>
<div class="r" style="left:524px;top:660px;width:639px;height:1px;background-image:repeating-linear-gradient(90deg,#c6c6c6 0 1px,transparent 1px 2px)"></div>
<div class="r" style="left:484px;top:680px;width:40px;height:1px;background:#aec3dd"></div>
<div class="r" style="left:524px;top:680px;width:639px;height:1px;background-image:repeating-linear-gradient(90deg,#c6c6c6 0 1px,transparent 1px 2px)"></div>
<div class="r" style="left:484px;top:700px;width:40px;height:1px;background:#aec3dd"></div>
<div class="r" style="left:524px;top:700px;width:639px;height:1px;background-image:repeating-linear-gradient(90deg,#c6c6c6 0 1px,transparent 1px 2px)"></div>
<div class="r" style="left:524px;top:240px;width:1px;height:450px;background:#a9c0dc"></div>
<div class="t" style="left:527.8px;top:244.00px;font-size:14.3px;line-height:14.3px;color:#111;font-weight:normal;transform:scaleX(0.9);transform-origin:left top;">PSD</div>
<div class="t" style="left:628.5px;top:244.00px;font-size:14.3px;line-height:14.3px;color:#111;font-weight:normal;transform:scaleX(0.9);transform-origin:left top;">IKMAidMul</div>
<svg class="r" style="left:1057px;top:243px" width="17" height="17" viewBox="0 0 17 17"><rect x="0.9" y="0.9" width="15" height="15" fill="#fff" stroke="#383838" stroke-width="1.7"/></svg>
<svg class="r" style="left:1104px;top:243px" width="17" height="17" viewBox="0 0 17 17"><rect x="0.9" y="0.9" width="15" height="15" fill="#fff" stroke="#383838" stroke-width="1.7"/><path d="M2.6 7.8 L6.1 11.2 L13.6 4" fill="none" stroke="#454545" stroke-width="1.8"/></svg>
<svg class="r" style="left:1150px;top:243px" width="17" height="17" viewBox="0 0 17 17"><rect x="0.9" y="0.9" width="15" height="15" fill="#fff" stroke="#383838" stroke-width="1.7"/></svg>
<div class="t" style="left:527.8px;top:264.00px;font-size:14.3px;line-height:14.3px;color:#111;font-weight:normal;transform:scaleX(0.9);transform-origin:left top;">PSD</div>
<div class="t" style="left:628.5px;top:264.00px;font-size:14.3px;line-height:14.3px;color:#111;font-weight:normal;transform:scaleX(0.9);transform-origin:left top;">IKMArtL</div>
<svg class="r" style="left:1057px;top:263px" width="17" height="17" viewBox="0 0 17 17"><rect x="0.9" y="0.9" width="15" height="15" fill="#fff" stroke="#383838" stroke-width="1.7"/></svg>
<svg class="r" style="left:1104px;top:263px" width="17" height="17" viewBox="0 0 17 17"><rect x="0.9" y="0.9" width="15" height="15" fill="#fff" stroke="#383838" stroke-width="1.7"/><path d="M2.6 7.8 L6.1 11.2 L13.6 4" fill="none" stroke="#454545" stroke-width="1.8"/></svg>
<svg class="r" style="left:1150px;top:263px" width="17" height="17" viewBox="0 0 17 17"><rect x="0.9" y="0.9" width="15" height="15" fill="#fff" stroke="#383838" stroke-width="1.7"/></svg>
<div class="t" style="left:527.8px;top:284.00px;font-size:14.3px;line-height:14.3px;color:#111;font-weight:normal;transform:scaleX(0.9);transform-origin:left top;">PSD</div>
<div class="t" style="left:628.5px;top:284.00px;font-size:14.3px;line-height:14.3px;color:#111;font-weight:normal;transform:scaleX(0.9);transform-origin:left top;">IKMInvToc</div>
<svg class="r" style="left:1057px;top:283px" width="17" height="17" viewBox="0 0 17 17"><rect x="0.9" y="0.9" width="15" height="15" fill="#fff" stroke="#383838" stroke-width="1.7"/><path d="M2.6 7.8 L6.1 11.2 L13.6 4" fill="none" stroke="#454545" stroke-width="1.8"/></svg>
<svg class="r" style="left:1104px;top:283px" width="17" height="17" viewBox="0 0 17 17"><rect x="0.9" y="0.9" width="15" height="15" fill="#fff" stroke="#383838" stroke-width="1.7"/><path d="M2.6 7.8 L6.1 11.2 L13.6 4" fill="none" stroke="#454545" stroke-width="1.8"/></svg>
<svg class="r" style="left:1150px;top:283px" width="17" height="17" viewBox="0 0 17 17"><rect x="0.9" y="0.9" width="15" height="15" fill="#fff" stroke="#383838" stroke-width="1.7"/></svg>
<div class="t" style="left:527.8px;top:304.00px;font-size:14.3px;line-height:14.3px;color:#111;font-weight:normal;transform:scaleX(0.9);transform-origin:left top;">PSD</div>
<div class="t" style="left:628.5px;top:304.00px;font-size:14.3px;line-height:14.3px;color:#111;font-weight:normal;transform:scaleX(0.9);transform-origin:left top;">IKMInvToc</div>
<svg class="r" style="left:1057px;top:303px" width="17" height="17" viewBox="0 0 17 17"><rect x="0.9" y="0.9" width="15" height="15" fill="#fff" stroke="#383838" stroke-width="1.7"/><path d="M2.6 7.8 L6.1 11.2 L13.6 4" fill="none" stroke="#454545" stroke-width="1.8"/></svg>
<svg class="r" style="left:1104px;top:303px" width="17" height="17" viewBox="0 0 17 17"><rect x="0.9" y="0.9" width="15" height="15" fill="#fff" stroke="#383838" stroke-width="1.7"/><path d="M2.6 7.8 L6.1 11.2 L13.6 4" fill="none" stroke="#454545" stroke-width="1.8"/></svg>
<svg class="r" style="left:1150px;top:303px" width="17" height="17" viewBox="0 0 17 17"><rect x="0.9" y="0.9" width="15" height="15" fill="#fff" stroke="#383838" stroke-width="1.7"/></svg>
<div class="t" style="left:527.8px;top:324.00px;font-size:14.3px;line-height:14.3px;color:#111;font-weight:normal;transform:scaleX(0.9);transform-origin:left top;">PSD</div>
<div class="t" style="left:628.5px;top:324.00px;font-size:14.3px;line-height:14.3px;color:#111;font-weight:normal;transform:scaleX(0.9);transform-origin:left top;">IKMInvToc</div>
<svg class="r" style="left:1057px;top:323px" width="17" height="17" viewBox="0 0 17 17"><rect x="0.9" y="0.9" width="15" height="15" fill="#fff" stroke="#383838" stroke-width="1.7"/><path d="M2.6 7.8 L6.1 11.2 L13.6 4" fill="none" stroke="#454545" stroke-width="1.8"/></svg>
<svg class="r" style="left:1104px;top:323px" width="17" height="17" viewBox="0 0 17 17"><rect x="0.9" y="0.9" width="15" height="15" fill="#fff" stroke="#383838" stroke-width="1.7"/><path d="M2.6 7.8 L6.1 11.2 L13.6 4" fill="none" stroke="#454545" stroke-width="1.8"/></svg>
<svg class="r" style="left:1150px;top:323px" width="17" height="17" viewBox="0 0 17 17"><rect x="0.9" y="0.9" width="15" height="15" fill="#fff" stroke="#383838" stroke-width="1.7"/></svg>
<div class="t" style="left:527.8px;top:344.00px;font-size:14.3px;line-height:14.3px;color:#111;font-weight:normal;transform:scaleX(0.9);transform-origin:left top;">PSD</div>
<div class="t" style="left:628.5px;top:344.00px;font-size:14.3px;line-height:14.3px;color:#111;font-weight:normal;transform:scaleX(0.9);transform-origin:left top;">IKMPsdRe</div>
<svg class="r" style="left:1057px;top:343px" width="17" height="17" viewBox="0 0 17 17"><rect x="0.9" y="0.9" width="15" height="15" fill="#fff" stroke="#383838" stroke-width="1.7"/><path d="M2.6 7.8 L6.1 11.2 L13.6 4" fill="none" stroke="#454545" stroke-width="1.8"/></svg>
<svg class="r" style="left:1104px;top:343px" width="17" height="17" viewBox="0 0 17 17"><rect x="0.9" y="0.9" width="15" height="15" fill="#fff" stroke="#383838" stroke-width="1.7"/><path d="M2.6 7.8 L6.1 11.2 L13.6 4" fill="none" stroke="#454545" stroke-width="1.8"/></svg>
<svg class="r" style="left:1150px;top:343px" width="17" height="17" viewBox="0 0 17 17"><rect x="0.9" y="0.9" width="15" height="15" fill="#fff" stroke="#383838" stroke-width="1.7"/></svg>
<div class="t" style="left:527.8px;top:364.00px;font-size:14.3px;line-height:14.3px;color:#111;font-weight:normal;transform:scaleX(0.9);transform-origin:left top;">PSD</div>
<div class="t" style="left:628.5px;top:364.00px;font-size:14.3px;line-height:14.3px;color:#111;font-weight:normal;transform:scaleX(0.9);transform-origin:left top;">IKMPsdRe</div>
<svg class="r" style="left:1057px;top:363px" width="17" height="17" viewBox="0 0 17 17"><rect x="0.9" y="0.9" width="15" height="15" fill="#fff" stroke="#383838" stroke-width="1.7"/><path d="M2.6 7.8 L6.1 11.2 L13.6 4" fill="none" stroke="#454545" stroke-width="1.8"/></svg>
<svg class="r" style="left:1104px;top:363px" width="17" height="17" viewBox="0 0 17 17"><rect x="0.9" y="0.9" width="15" height="15" fill="#fff" stroke="#383838" stroke-width="1.7"/><path d="M2.6 7.8 L6.1 11.2 L13.6 4" fill="none" stroke="#454545" stroke-width="1.8"/></svg>
<svg class="r" style="left:1150px;top:363px" width="17" height="17" viewBox="0 0 17 17"><rect x="0.9" y="0.9" width="15" height="15" fill="#fff" stroke="#383838" stroke-width="1.7"/></svg>
<div class="t" style="left:527.8px;top:384.00px;font-size:14.3px;line-height:14.3px;color:#111;font-weight:normal;transform:scaleX(0.9);transform-origin:left top;">PSD</div>
<div class="t" style="left:628.5px;top:384.00px;font-size:14.3px;line-height:14.3px;color:#111;font-weight:normal;transform:scaleX(0.9);transform-origin:left top;">IKM_Test</div>
<svg class="r" style="left:1057px;top:383px" width="17" height="17" viewBox="0 0 17 17"><rect x="0.9" y="0.9" width="15" height="15" fill="#fff" stroke="#383838" stroke-width="1.7"/><path d="M2.6 7.8 L6.1 11.2 L13.6 4" fill="none" stroke="#454545" stroke-width="1.8"/></svg>
<svg class="r" style="left:1104px;top:383px" width="17" height="17" viewBox="0 0 17 17"><rect x="0.9" y="0.9" width="15" height="15" fill="#fff" stroke="#383838" stroke-width="1.7"/><path d="M2.6 7.8 L6.1 11.2 L13.6 4" fill="none" stroke="#454545" stroke-width="1.8"/></svg>
<svg class="r" style="left:1150px;top:383px" width="17" height="17" viewBox="0 0 17 17"><rect x="0.9" y="0.9" width="15" height="15" fill="#fff" stroke="#383838" stroke-width="1.7"/></svg>
<div class="t" style="left:527.8px;top:404.00px;font-size:14.3px;line-height:14.3px;color:#111;font-weight:normal;transform:scaleX(0.9);transform-origin:left top;">PSD</div>
<div class="t" style="left:628.5px;top:404.00px;font-size:14.3px;line-height:14.3px;color:#111;font-weight:normal;transform:scaleX(0.9);transform-origin:left top;">IKM_Test</div>
<svg class="r" style="left:1057px;top:403px" width="17" height="17" viewBox="0 0 17 17"><rect x="0.9" y="0.9" width="15" height="15" fill="#fff" stroke="#383838" stroke-width="1.7"/><path d="M2.6 7.8 L6.1 11.2 L13.6 4" fill="none" stroke="#454545" stroke-width="1.8"/></svg>
<svg class="r" style="left:1104px;top:403px" width="17" height="17" viewBox="0 0 17 17"><rect x="0.9" y="0.9" width="15" height="15" fill="#fff" stroke="#383838" stroke-width="1.7"/><path d="M2.6 7.8 L6.1 11.2 L13.6 4" fill="none" stroke="#454545" stroke-width="1.8"/></svg>
<svg class="r" style="left:1150px;top:403px" width="17" height="17" viewBox="0 0 17 17"><rect x="0.9" y="0.9" width="15" height="15" fill="#fff" stroke="#383838" stroke-width="1.7"/></svg>
<div class="t" style="left:527.8px;top:424.00px;font-size:14.3px;line-height:14.3px;color:#111;font-weight:normal;transform:scaleX(0.9);transform-origin:left top;">PSD</div>
<div class="t" style="left:628.5px;top:424.00px;font-size:14.3px;line-height:14.3px;color:#111;font-weight:normal;transform:scaleX(0.9);transform-origin:left top;">IMDDefGe</div>
<svg class="r" style="left:1057px;top:423px" width="17" height="17" viewBox="0 0 17 17"><rect x="0.9" y="0.9" width="15" height="15" fill="#fff" stroke="#383838" stroke-width="1.7"/></svg>
<svg class="r" style="left:1104px;top:423px" width="17" height="17" viewBox="0 0 17 17"><rect x="0.9" y="0.9" width="15" height="15" fill="#fff" stroke="#383838" stroke-width="1.7"/></svg>
<svg class="r" style="left:1150px;top:423px" width="17" height="17" viewBox="0 0 17 17"><rect x="0.9" y="0.9" width="15" height="15" fill="#fff" stroke="#383838" stroke-width="1.7"/></svg>
<div class="t" style="left:527.8px;top:444.00px;font-size:14.3px;line-height:14.3px;color:#111;font-weight:normal;transform:scaleX(0.9);transform-origin:left top;">PSD</div>
<div class="t" style="left:628.5px;top:444.00px;font-size:14.3px;line-height:14.3px;color:#111;font-weight:normal;transform:scaleX(0.9);transform-origin:left top;">IMDDefGe</div>
<svg class="r" style="left:1057px;top:443px" width="17" height="17" viewBox="0 0 17 17"><rect x="0.9" y="0.9" width="15" height="15" fill="#fff" stroke="#383838" stroke-width="1.7"/></svg>
<svg class="r" style="left:1104px;top:443px" width="17" height="17" viewBox="0 0 17 17"><rect x="0.9" y="0.9" width="15" height="15" fill="#fff" stroke="#383838" stroke-width="1.7"/></svg>
<svg class="r" style="left:1150px;top:443px" width="17" height="17" viewBox="0 0 17 17"><rect x="0.9" y="0.9" width="15" height="15" fill="#fff" stroke="#383838" stroke-width="1.7"/></svg>
<div class="t" style="left:527.8px;top:464.00px;font-size:14.3px;line-height:14.3px;color:#111;font-weight:normal;transform:scaleX(0.9);transform-origin:left top;">PSD</div>
<div class="t" style="left:628.5px;top:464.00px;font-size:14.3px;line-height:14.3px;color:#111;font-weight:normal;transform:scaleX(0.9);transform-origin:left top;">IMDDefMo</div>
<svg class="r" style="left:1057px;top:463px" width="17" height="17" viewBox="0 0 17 17"><rect x="0.9" y="0.9" width="15" height="15" fill="#fff" stroke="#383838" stroke-width="1.7"/></svg>
<svg class="r" style="left:1104px;top:463px" width="17" height="17" viewBox="0 0 17 17"><rect x="0.9" y="0.9" width="15" height="15" fill="#fff" stroke="#383838" stroke-width="1.7"/></svg>
<svg class="r" style="left:1150px;top:463px" width="17" height="17" viewBox="0 0 17 17"><rect x="0.9" y="0.9" width="15" height="15" fill="#fff" stroke="#383838" stroke-width="1.7"/></svg>
<div class="t" style="left:527.8px;top:484.00px;font-size:14.3px;line-height:14.3px;color:#111;font-weight:normal;transform:scaleX(0.9);transform-origin:left top;">PSD</div>
<div class="t" style="left:628.5px;top:484.00px;font-size:14.3px;line-height:14.3px;color:#111;font-weight:normal;transform:scaleX(0.9);transform-origin:left top;">IMDDefMo</div>
<svg class="r" style="left:1057px;top:483px" width="17" height="17" viewBox="0 0 17 17"><rect x="0.9" y="0.9" width="15" height="15" fill="#fff" stroke="#383838" stroke-width="1.7"/></svg>
<svg class="r" style="left:1104px;top:483px" width="17" height="17" viewBox="0 0 17 17"><rect x="0.9" y="0.9" width="15" height="15" fill="#fff" stroke="#383838" stroke-width="1.7"/></svg>
<svg class="r" style="left:1150px;top:483px" width="17" height="17" viewBox="0 0 17 17"><rect x="0.9" y="0.9" width="15" height="15" fill="#fff" stroke="#383838" stroke-width="1.7"/></svg>
<div class="t" style="left:527.8px;top:504.00px;font-size:14.3px;line-height:14.3px;color:#111;font-weight:normal;transform:scaleX(0.9);transform-origin:left top;">PSD</div>
<div class="t" style="left:628.5px;top:504.00px;font-size:14.3px;line-height:14.3px;color:#111;font-weight:normal;transform:scaleX(0.9);transform-origin:left top;">IMDDetMo</div>
<svg class="r" style="left:1057px;top:503px" width="17" height="17" viewBox="0 0 17 17"><rect x="0.9" y="0.9" width="15" height="15" fill="#fff" stroke="#383838" stroke-width="1.7"/></svg>
<svg class="r" style="left:1104px;top:503px" width="17" height="17" viewBox="0 0 17 17"><rect x="0.9" y="0.9" width="15" height="15" fill="#fff" stroke="#383838" stroke-width="1.7"/></svg>
<svg class="r" style="left:1150px;top:503px" width="17" height="17" viewBox="0 0 17 17"><rect x="0.9" y="0.9" width="15" height="15" fill="#fff" stroke="#383838" stroke-width="1.7"/></svg>
<div class="t" style="left:527.8px;top:524.00px;font-size:14.3px;line-height:14.3px;color:#111;font-weight:normal;transform:scaleX(0.9);transform-origin:left top;">PSD</div>
<div class="t" style="left:628.5px;top:524.00px;font-size:14.3px;line-height:14.3px;color:#111;font-weight:normal;transform:scaleX(0.9);transform-origin:left top;">IMDGesZo</div>
<svg class="r" style="left:1057px;top:523px" width="17" height="17" viewBox="0 0 17 17"><rect x="0.9" y="0.9" width="15" height="15" fill="#fff" stroke="#383838" stroke-width="1.7"/></svg>
<svg class="r" style="left:1104px;top:523px" width="17" height="17" viewBox="0 0 17 17"><rect x="0.9" y="0.9" width="15" height="15" fill="#fff" stroke="#383838" stroke-width="1.7"/></svg>
<svg class="r" style="left:1150px;top:523px" width="17" height="17" viewBox="0 0 17 17"><rect x="0.9" y="0.9" width="15" height="15" fill="#fff" stroke="#383838" stroke-width="1.7"/></svg>
<div class="t" style="left:527.8px;top:544.00px;font-size:14.3px;line-height:14.3px;color:#111;font-weight:normal;transform:scaleX(0.9);transform-origin:left top;">PSD</div>
<div class="t" style="left:628.5px;top:544.00px;font-size:14.3px;line-height:14.3px;color:#111;font-weight:normal;transform:scaleX(0.9);transform-origin:left top;">IMDIniIT</div>
<svg class="r" style="left:1057px;top:543px" width="17" height="17" viewBox="0 0 17 17"><rect x="0.9" y="0.9" width="15" height="15" fill="#fff" stroke="#383838" stroke-width="1.7"/></svg>
<svg class="r" style="left:1104px;top:543px" width="17" height="17" viewBox="0 0 17 17"><rect x="0.9" y="0.9" width="15" height="15" fill="#fff" stroke="#383838" stroke-width="1.7"/></svg>
<svg class="r" style="left:1150px;top:543px" width="17" height="17" viewBox="0 0 17 17"><rect x="0.9" y="0.9" width="15" height="15" fill="#fff" stroke="#383838" stroke-width="1.7"/></svg>
<div class="t" style="left:527.8px;top:564.00px;font-size:14.3px;line-height:14.3px;color:#111;font-weight:normal;transform:scaleX(0.9);transform-origin:left top;">PSD</div>
<div class="t" style="left:628.5px;top:564.00px;font-size:14.3px;line-height:14.3px;color:#111;font-weight:normal;transform:scaleX(0.9);transform-origin:left top;">IMDInterI</div>
<svg class="r" style="left:1057px;top:563px" width="17" height="17" viewBox="0 0 17 17"><rect x="0.9" y="0.9" width="15" height="15" fill="#fff" stroke="#383838" stroke-width="1.7"/></svg>
<svg class="r" style="left:1104px;top:563px" width="17" height="17" viewBox="0 0 17 17"><rect x="0.9" y="0.9" width="15" height="15" fill="#fff" stroke="#383838" stroke-width="1.7"/></svg>
<svg class="r" style="left:1150px;top:563px" width="17" height="17" viewBox="0 0 17 17"><rect x="0.9" y="0.9" width="15" height="15" fill="#fff" stroke="#383838" stroke-width="1.7"/></svg>
<div class="t" style="left:527.8px;top:584.00px;font-size:14.3px;line-height:14.3px;color:#111;font-weight:normal;transform:scaleX(0.9);transform-origin:left top;">PSD</div>
<div class="t" style="left:628.5px;top:584.00px;font-size:14.3px;line-height:14.3px;color:#111;font-weight:normal;transform:scaleX(0.9);transform-origin:left top;">IMDInterV</div>
<svg class="r" style="left:1057px;top:583px" width="17" height="17" viewBox="0 0 17 17"><rect x="0.9" y="0.9" width="15" height="15" fill="#fff" stroke="#383838" stroke-width="1.7"/></svg>
<svg class="r" style="left:1104px;top:583px" width="17" height="17" viewBox="0 0 17 17"><rect x="0.9" y="0.9" width="15" height="15" fill="#fff" stroke="#383838" stroke-width="1.7"/></svg>
<svg class="r" style="left:1150px;top:583px" width="17" height="17" viewBox="0 0 17 17"><rect x="0.9" y="0.9" width="15" height="15" fill="#fff" stroke="#383838" stroke-width="1.7"/></svg>
<div class="t" style="left:527.8px;top:604.00px;font-size:14.3px;line-height:14.3px;color:#111;font-weight:normal;transform:scaleX(0.9);transform-origin:left top;">PSD</div>
<div class="t" style="left:628.5px;top:604.00px;font-size:14.3px;line-height:14.3px;color:#111;font-weight:normal;transform:scaleX(0.9);transform-origin:left top;">IMDInterZ</div>
<svg class="r" style="left:1057px;top:603px" width="17" height="17" viewBox="0 0 17 17"><rect x="0.9" y="0.9" width="15" height="15" fill="#fff" stroke="#383838" stroke-width="1.7"/></svg>
<svg class="r" style="left:1104px;top:603px" width="17" height="17" viewBox="0 0 17 17"><rect x="0.9" y="0.9" width="15" height="15" fill="#fff" stroke="#383838" stroke-width="1.7"/></svg>
<svg class="r" style="left:1150px;top:603px" width="17" height="17" viewBox="0 0 17 17"><rect x="0.9" y="0.9" width="15" height="15" fill="#fff" stroke="#383838" stroke-width="1.7"/></svg>
<div class="t" style="left:527.8px;top:624.00px;font-size:14.3px;line-height:14.3px;color:#111;font-weight:normal;transform:scaleX(0.9);transform-origin:left top;">PSD</div>
<div class="t" style="left:628.5px;top:624.00px;font-size:14.3px;line-height:14.3px;color:#111;font-weight:normal;transform:scaleX(0.9);transform-origin:left top;">IMDLame</div>
<svg class="r" style="left:1057px;top:623px" width="17" height="17" viewBox="0 0 17 17"><rect x="0.9" y="0.9" width="15" height="15" fill="#fff" stroke="#383838" stroke-width="1.7"/></svg>
<svg class="r" style="left:1104px;top:623px" width="17" height="17" viewBox="0 0 17 17"><rect x="0.9" y="0.9" width="15" height="15" fill="#fff" stroke="#383838" stroke-width="1.7"/></svg>
<svg class="r" style="left:1150px;top:623px" width="17" height="17" viewBox="0 0 17 17"><rect x="0.9" y="0.9" width="15" height="15" fill="#fff" stroke="#383838" stroke-width="1.7"/></svg>
<div class="t" style="left:527.8px;top:644.00px;font-size:14.3px;line-height:14.3px;color:#111;font-weight:normal;transform:scaleX(0.9);transform-origin:left top;">PSD</div>
<div class="t" style="left:628.5px;top:644.00px;font-size:14.3px;line-height:14.3px;color:#111;font-weight:normal;transform:scaleX(0.9);transform-origin:left top;">IMDLame</div>
<svg class="r" style="left:1057px;top:643px" width="17" height="17" viewBox="0 0 17 17"><rect x="0.9" y="0.9" width="15" height="15" fill="#fff" stroke="#383838" stroke-width="1.7"/></svg>
<svg class="r" style="left:1104px;top:643px" width="17" height="17" viewBox="0 0 17 17"><rect x="0.9" y="0.9" width="15" height="15" fill="#fff" stroke="#383838" stroke-width="1.7"/></svg>
<svg class="r" style="left:1150px;top:643px" width="17" height="17" viewBox="0 0 17 17"><rect x="0.9" y="0.9" width="15" height="15" fill="#fff" stroke="#383838" stroke-width="1.7"/></svg>
<div class="t" style="left:527.8px;top:664.00px;font-size:14.3px;line-height:14.3px;color:#111;font-weight:normal;transform:scaleX(0.9);transform-origin:left top;">PSD</div>
<div class="t" style="left:628.5px;top:664.00px;font-size:14.3px;line-height:14.3px;color:#111;font-weight:normal;transform:scaleX(0.9);transform-origin:left top;">IMDLame</div>
<svg class="r" style="left:1057px;top:663px" width="17" height="17" viewBox="0 0 17 17"><rect x="0.9" y="0.9" width="15" height="15" fill="#fff" stroke="#383838" stroke-width="1.7"/></svg>
<svg class="r" style="left:1104px;top:663px" width="17" height="17" viewBox="0 0 17 17"><rect x="0.9" y="0.9" width="15" height="15" fill="#fff" stroke="#383838" stroke-width="1.7"/></svg>
<svg class="r" style="left:1150px;top:663px" width="17" height="17" viewBox="0 0 17 17"><rect x="0.9" y="0.9" width="15" height="15" fill="#fff" stroke="#383838" stroke-width="1.7"/></svg>
<div class="t" style="left:527.8px;top:684.00px;font-size:14.3px;line-height:14.3px;color:#111;font-weight:normal;transform:scaleX(0.9);transform-origin:left top;">PSD</div>
<div class="t" style="left:628.5px;top:684.00px;font-size:14.3px;line-height:14.3px;color:#111;font-weight:normal;transform:scaleX(0.9);transform-origin:left top;">IMDLatIT</div>
<svg class="r" style="left:1057px;top:683px" width="17" height="17" viewBox="0 0 17 17"><rect x="0.9" y="0.9" width="15" height="15" fill="#fff" stroke="#383838" stroke-width="1.7"/></svg>
<svg class="r" style="left:1104px;top:683px" width="17" height="17" viewBox="0 0 17 17"><rect x="0.9" y="0.9" width="15" height="15" fill="#fff" stroke="#383838" stroke-width="1.7"/></svg>
<svg class="r" style="left:1150px;top:683px" width="17" height="17" viewBox="0 0 17 17"><rect x="0.9" y="0.9" width="15" height="15" fill="#fff" stroke="#383838" stroke-width="1.7"/></svg>
<div class="t" style="left:1008px;top:284.00px;font-size:14.3px;line-height:14.3px;color:#111;font-weight:normal;transform:scaleX(0.9);transform-origin:left top;">3</div>
<div class="t" style="left:1008px;top:304.00px;font-size:14.3px;line-height:14.3px;color:#111;font-weight:normal;transform:scaleX(0.9);transform-origin:left top;">3</div>
<div class="t" style="left:1008px;top:324.00px;font-size:14.3px;line-height:14.3px;color:#111;font-weight:normal;transform:scaleX(0.9);transform-origin:left top;">3</div>
<div class="t" style="left:1008px;top:344.00px;font-size:14.3px;line-height:14.3px;color:#111;font-weight:normal;transform:scaleX(0.9);transform-origin:left top;">0</div>
<div class="t" style="left:1008px;top:384.00px;font-size:14.3px;line-height:14.3px;color:#111;font-weight:normal;transform:scaleX(0.9);transform-origin:left top;">0</div>
<div class="t" style="left:1008px;top:504.00px;font-size:14.3px;line-height:14.3px;color:#111;font-weight:normal;transform:scaleX(0.9);transform-origin:left top;">0</div>
<div class="t" style="left:1008px;top:524.00px;font-size:14.3px;line-height:14.3px;color:#111;font-weight:normal;transform:scaleX(0.9);transform-origin:left top;">0</div>
<div class="t" style="left:1008px;top:544.00px;font-size:14.3px;line-height:14.3px;color:#111;font-weight:normal;transform:scaleX(0.9);transform-origin:left top;">0</div>
<div class="t" style="left:1008px;top:564.00px;font-size:14.3px;line-height:14.3px;color:#111;font-weight:normal;transform:scaleX(0.9);transform-origin:left top;">0</div>
<div class="t" style="left:1008px;top:684.00px;font-size:14.3px;line-height:14.3px;color:#111;font-weight:normal;transform:scaleX(0.9);transform-origin:left top;">0</div>
<div class="r" style="left:625px;top:240px;width:1px;height:450px;background-image:repeating-linear-gradient(180deg,#c6c6c6 0 1px,transparent 1px 2px)"></div>
<div class="r" style="left:1045px;top:240px;width:1px;height:450px;background-image:repeating-linear-gradient(180deg,#c6c6c6 0 1px,transparent 1px 2px)"></div>
<div class="r" style="left:1086px;top:240px;width:1px;height:450px;background-image:repeating-linear-gradient(180deg,#c6c6c6 0 1px,transparent 1px 2px)"></div>
<div class="r" style="left:1137px;top:240px;width:1px;height:450px;background-image:repeating-linear-gradient(180deg,#c6c6c6 0 1px,transparent 1px 2px)"></div>
<div class="r" style="left:484px;top:260px;width:40px;height:20px;background:#fcd18f;border-top:2px solid #f5a94a;box-sizing:border-box"></div>
<div class="r" style="left:523px;top:241px;width:2px;height:20px;background:#f5a94a"></div>
<div class="r" style="left:624px;top:259px;width:100px;height:3.6px;background:#1c1c1c"></div>
<div class="r" style="left:624px;top:279.2px;width:100px;height:3.6px;background:#1c1c1c"></div>
<div class="r" style="left:624px;top:259px;width:3.6px;height:23.8px;background:#1c1c1c"></div>
<div class="r" style="left:1163px;top:219px;width:20px;height:471px;background:#7596c0"></div>
<div class="r" style="left:1163px;top:219px;width:20px;height:20px;background:linear-gradient(90deg,#d6e5f8 0 55%,#c3d7f2 55%);border:1px solid #5f7ca6;box-sizing:border-box"></div>
<svg class="r" style="left:1166px;top:222px" width="14" height="12" viewBox="0 0 14 12"><path d="M1.5 9 L7 3 L12.5 9 Z" fill="#3b4e6b"/></svg>
<div class="r" style="left:1164px;top:581px;width:18px;height:54px;background:linear-gradient(90deg,#dce9f9 0 60%,#c4d7f2 60%);border:1px solid #6d8bb3;box-sizing:border-box"></div>
<div class="r" style="left:1184px;top:212px;width:314px;height:478px;background:#f0f0f0"></div>
<svg class="r" style="left:1190px;top:220px" width="308" height="27" viewBox="0 0 308 27"><defs><linearGradient id="tg" x1="0" y1="0" x2="0" y2="1"><stop offset="0" stop-color="#fdfdfd"/><stop offset="1" stop-color="#f0f0f0"/></linearGradient></defs><path d="M98.5 26 L98.5 25 L83 25 Q88 10 92 4 Q94 1.8 98 1.8 L183 1.8 Q186 1.8 188 5 L196 25 L313 25" fill="url(#tg)" stroke="#a5a5a5" stroke-width="1"/><path d="M2.5 200 L2.5 25.5 L8.5 25.5 Q16 8 20 4 Q22 1.5 26 1.5 L92 1.5 Q96 1.5 98 5 L105.5 25.5" fill="url(#tg)" stroke="#a5a5a5" stroke-width="1"/></svg>
<div class="r" style="left:1192px;top:246px;width:1px;height:444px;background:#a5a5a5"></div>
<div class="t" style="left:1213px;top:226.30px;font-size:14.3px;line-height:14.3px;color:#111;font-weight:bold;">Définition</div>
<div class="t" style="left:1294.6px;top:226.61px;font-size:14.4px;line-height:14.4px;color:#111;font-weight:normal;transform:scaleX(0.87);transform-origin:left top;">Commentaire</div>
<div class="r" style="left:1200px;top:250px;width:114.8px;height:22px;overflow:hidden">
<div class="t" style="right:-4.200000000000003px;top:5.21px;font-size:14.4px;line-height:14.4px;color:#111;font-weight:normal;transform:scaleX(0.935);transform-origin:right top;">Type Requête</div>
</div>
<div class="t" style="right:178.70000000000005px;top:278.81px;font-size:14.4px;line-height:14.4px;color:#111;font-weight:normal;transform:scaleX(0.931);transform-origin:right top;">Requête</div>
<div class="t" style="right:178.70000000000005px;top:302.81px;font-size:14.4px;line-height:14.4px;color:#111;font-weight:normal;transform:scaleX(0.933);transform-origin:right top;">Etat</div>
<div class="t" style="right:178.70000000000005px;top:326.81px;font-size:14.4px;line-height:14.4px;color:#111;font-weight:normal;transform:scaleX(0.915);transform-origin:right top;">Désignation</div>
<div class="t" style="right:179px;top:351.01px;font-size:14.4px;line-height:14.4px;color:#111;font-weight:normal;transform:scaleX(0.922);transform-origin:right top;">Mot Directeur</div>
<div class="t" style="right:179px;top:374.81px;font-size:14.4px;line-height:14.4px;color:#111;font-weight:normal;transform:scaleX(0.91);transform-origin:right top;">Désignation Courte</div>
<div class="t" style="right:179px;top:400.21px;font-size:14.4px;line-height:14.4px;color:#111;font-weight:normal;transform:scaleX(0.858);transform-origin:right top;">Famille</div>
<div class="t" style="right:179px;top:429.21px;font-size:14.4px;line-height:14.4px;color:#111;font-weight:normal;transform:scaleX(0.874);transform-origin:right top;">Sous-Famille</div>
<div class="t" style="right:179px;top:455.31px;font-size:14.4px;line-height:14.4px;color:#111;font-weight:normal;transform:scaleX(0.907);transform-origin:right top;">Gestion Version</div>
<div class="t" style="right:179px;top:479.11px;font-size:14.4px;line-height:14.4px;color:#111;font-weight:normal;transform:scaleX(0.957);transform-origin:right top;">Activation Trace</div>
<div class="t" style="right:179px;top:505.11px;font-size:14.4px;line-height:14.4px;color:#111;font-weight:normal;transform:scaleX(0.948);transform-origin:right top;">Niveau de Trace</div>
<div class="t" style="right:175px;top:531.71px;font-size:14.4px;line-height:14.4px;color:#111;font-weight:normal;transform:scaleX(0.936);transform-origin:right top;">Activation Cartouche</div>
<div class="t" style="right:180px;top:555.81px;font-size:14.4px;line-height:14.4px;color:#111;font-weight:normal;transform:scaleX(0.931);transform-origin:right top;">Activation Modif.</div>
<div class="t" style="right:179px;top:579.31px;font-size:14.4px;line-height:14.4px;color:#111;font-weight:normal;transform:scaleX(0.927);transform-origin:right top;">Objectif Requête</div>
<div class="t" style="right:178.5999999999999px;top:602.71px;font-size:14.4px;line-height:14.4px;color:#111;font-weight:normal;transform:scaleX(0.922);transform-origin:right top;">Contexte Exécution</div>
<div class="t" style="left:1339px;top:255.21px;font-size:14.4px;line-height:14.4px;color:#111;font-weight:normal;transform:scaleX(0.92);transform-origin:left top;">PSD</div>
<div class="t" style="left:1339px;top:278.81px;font-size:14.4px;line-height:14.4px;color:#111;font-weight:normal;transform:scaleX(0.92);transform-origin:left top;">IKMArtL</div>
<div class="t" style="left:1339px;top:302.81px;font-size:14.4px;line-height:14.4px;color:#111;font-weight:normal;transform:scaleX(0.92);transform-origin:left top;">V</div>
<div class="t" style="left:1339px;top:326.81px;font-size:14.4px;line-height:14.4px;color:#111;font-weight:normal;transform:scaleX(0.92);transform-origin:left top;">Contrôle local PSD IKMArt</div>
<div class="r" style="left:1451px;top:253px;width:18px;height:17px;background:#cfcfcf"></div>
<div class="t" style="left:1160px;width:600px;text-align:center;top:255.84px;font-size:12px;line-height:12px;color:#f4f4f4;font-weight:bold;">?</div>
<div class="t" style="left:1477px;top:255.21px;font-size:14.4px;line-height:14.4px;color:#111;font-weight:normal;transform:scaleX(0.92);transform-origin:left top;">Procédure</div>
<div class="r" style="left:1335px;top:394px;width:163px;height:26px;background:#cbcbcb"></div>
<div class="r" style="left:1335px;top:423px;width:163px;height:26px;background:#cbcbcb"></div>
<div class="r" style="left:1335px;top:499px;width:163px;height:26px;background:#cbcbcb"></div>
<div class="t" style="left:1340.7px;top:505.11px;font-size:14.4px;line-height:14.4px;color:#8c8c8c;font-weight:normal;transform:scaleX(0.92);transform-origin:left top;">[1] Traces requête</div>
<svg class="r" style="left:1335px;top:456px" width="12" height="12" viewBox="0 0 12 12"><rect x="0.5" y="0.5" width="11" height="11" fill="#f4f4f4" stroke="#d8d8d8"/><path d="M2.5 6 L5 8.5 L10 3" fill="none" stroke="#c0c0c0" stroke-width="1.3"/></svg>
<svg class="r" style="left:1335px;top:480px" width="12" height="12" viewBox="0 0 12 12"><rect x="0.5" y="0.5" width="11" height="11" fill="#f4f4f4" stroke="#d8d8d8"/><path d="M2.5 6 L5 8.5 L10 3" fill="none" stroke="#c0c0c0" stroke-width="1.3"/></svg>
<svg class="r" style="left:1335px;top:532px" width="12" height="12" viewBox="0 0 12 12"><rect x="0.5" y="0.5" width="11" height="11" fill="#fff" stroke="#d8d8d8"/></svg>
<svg class="r" style="left:1335px;top:556px" width="12" height="12" viewBox="0 0 12 12"><rect x="0.5" y="0.5" width="11" height="11" fill="#f4f4f4" stroke="#d8d8d8"/><path d="M2.5 6 L5 8.5 L10 3" fill="none" stroke="#c0c0c0" stroke-width="1.3"/></svg>
<div class="r" style="left:1335px;top:599px;width:163px;height:91px;border:1px solid #a0a0a0;border-right:none;border-bottom:none;box-sizing:border-box"></div>
<div class="r" style="left:690px;top:185px;width:195px;height:26px;background:linear-gradient(#f3f8fe,#dfeafb);border:1px solid #a6c6ee;border-bottom:none;border-radius:5px 5px 0 0;box-sizing:border-box"></div>
<svg class="r" style="left:696px;top:190px" width="21" height="10" viewBox="0 0 21 10"><rect x="0.5" y="0.5" width="19" height="9" fill="#3d6fc4"/><rect x="1" y="2.5" width="18" height="7" fill="#222"/></svg>
<div class="t" style="left:721px;top:190.14px;font-size:14.6px;line-height:14.6px;color:#2b63b8;font-weight:normal;width:160px;overflow:hidden;">Req. (PSD) : Règles DIALOG (PSD) : Procédures</div>
<div class="r" style="left:1013px;top:197px;width:6px;height:493px;background:linear-gradient(90deg,rgba(0,0,0,0.42),rgba(0,0,0,0.16) 45%,rgba(0,0,0,0))"></div>
<div class="r" style="left:1013px;top:194px;width:6px;height:6px;background:linear-gradient(180deg,rgba(255,255,255,1),rgba(255,255,255,0))"></div>
<div class="r" style="left:684px;top:192px;width:329px;height:498px;background:#f0f0f0;border:1px solid #bcbcbc;border-bottom:none;box-sizing:border-box"></div>
<div class="r" style="left:722px;top:365px;width:287px;height:1px;background:#d7d7d7"></div>
<div class="r" style="left:722px;top:484px;width:287px;height:1px;background:#d7d7d7"></div>
<div class="r" style="left:722px;top:548px;width:287px;height:1px;background:#d7d7d7"></div>
<div class="r" style="left:688px;top:397px;width:322px;height:28px;background:#91c9f7"></div>
<div class="r" style="left:722px;top:399px;width:147px;height:23px;background:#8cc46b"></div>
<div class="t" style="left:727.8px;top:201.10px;font-size:15px;line-height:15px;color:#1a1a1a;font-weight:normal;transform:scaleX(0.945);transform-origin:left top;">Création (F9)</div>
<div class="t" style="left:727.8px;top:228.50px;font-size:15px;line-height:15px;color:#1a1a1a;font-weight:normal;transform:scaleX(1.012);transform-origin:left top;">Modification (F1)</div>
<div class="t" style="left:727.8px;top:255.90px;font-size:15px;line-height:15px;color:#1a1a1a;font-weight:normal;transform:scaleX(1.005);transform-origin:left top;">Modification Globale (Maj+F1)</div>
<div class="t" style="left:727.8px;top:283.30px;font-size:15px;line-height:15px;color:#1a1a1a;font-weight:normal;transform:scaleX(0.986);transform-origin:left top;">Duplication (F7)</div>
<div class="t" style="left:727.8px;top:310.70px;font-size:15px;line-height:15px;color:#1a1a1a;font-weight:normal;transform:scaleX(0.939);transform-origin:left top;">Suppression (F6)</div>
<div class="t" style="left:727.8px;top:338.10px;font-size:15px;line-height:15px;color:#1a1a1a;font-weight:normal;transform:scaleX(0.936);transform-origin:left top;">Détail (F8)</div>
<div class="t" style="left:727.8px;top:375.00px;font-size:15px;line-height:15px;color:#1a1a1a;font-weight:normal;transform:scaleX(0.945);transform-origin:left top;">Listes Partagées Objet</div>
<div class="t" style="left:727.8px;top:402.10px;font-size:15px;line-height:15px;color:#1a1a1a;font-weight:normal;transform:scaleX(0.914);transform-origin:left top;">Saisie Requête (F10)</div>
<div class="t" style="left:727.8px;top:429.70px;font-size:15px;line-height:15px;color:#1a1a1a;font-weight:normal;transform:scaleX(0.965);transform-origin:left top;">Consultation Requête (F12)</div>
<div class="t" style="left:727.8px;top:457.10px;font-size:15px;line-height:15px;color:#1a1a1a;font-weight:normal;transform:scaleX(0.98);transform-origin:left top;">Consultation Problèmes Requête</div>
<div class="t" style="left:727.8px;top:494.70px;font-size:15px;line-height:15px;color:#1a1a1a;font-weight:normal;transform:scaleX(1.008);transform-origin:left top;">Gestion Modifications</div>
<div class="t" style="left:727.8px;top:521.50px;font-size:15px;line-height:15px;color:#1a1a1a;font-weight:normal;transform:scaleX(0.973);transform-origin:left top;">Cas d'Emploi dans Studio</div>
<div class="t" style="left:727.8px;top:558.00px;font-size:15px;line-height:15px;color:#1a1a1a;font-weight:normal;transform:scaleX(0.972);transform-origin:left top;">Rechercher/Sélection</div>
<div class="t" style="left:727.8px;top:585.70px;font-size:15px;line-height:15px;color:#1a1a1a;font-weight:normal;transform:scaleX(0.987);transform-origin:left top;">Rechercher/Tout</div>
<div class="t" style="left:727.8px;top:613.20px;font-size:15px;line-height:15px;color:#1a1a1a;font-weight:normal;transform:scaleX(0.962);transform-origin:left top;">Arborescence Enfants</div>
<div class="t" style="left:727.8px;top:640.90px;font-size:15px;line-height:15px;color:#1a1a1a;font-weight:normal;transform:scaleX(0.947);transform-origin:left top;">Arborescence Pères</div>
<div class="t" style="left:727.8px;top:668.10px;font-size:15px;line-height:15px;color:#1a1a1a;font-weight:normal;transform:scaleX(0.963);transform-origin:left top;">Données globales</div>
<svg class="r" style="left:873px;top:404.5px" width="26" height="36" viewBox="0 0 26 36"><path d="M3.6 3.6 L3.6 26.4 L9.2 20.9 L13.6 31.4 L17.6 29.8 L13.3 19.8 L20.8 19.8 Z" fill="#fff" stroke="#000" stroke-width="2.2" stroke-linejoin="miter" stroke-miterlimit="10"/></svg>
</body></html>
